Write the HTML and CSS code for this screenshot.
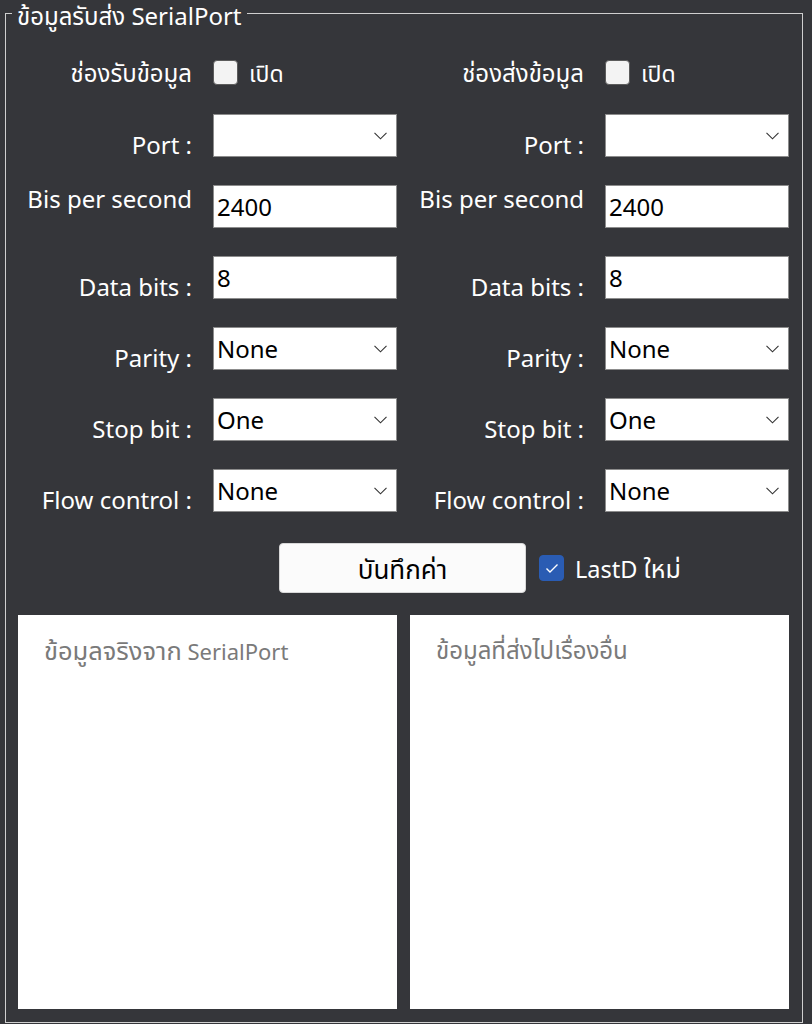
FILE: index.html
```html
<!DOCTYPE html>
<html lang="th">
<head>
<meta charset="utf-8">
<title>SerialPort</title>
<link rel="stylesheet" href="styles.css">
</head>
<body>
<div class="page">
  <fieldset class="group">
    <legend class="group-title">ข้อมูลรับส่ง SerialPort</legend>
    <div class="cols">
      <section class="col">
        <span class="label label-mid">ช่องรับข้อมูล</span>
        <label class="check"><span class="box"></span><span class="check-text">เปิด</span></label>

        <span class="label">Port :</span>
        <div class="combo"><span class="value"></span><svg class="chev" width="13" height="8" viewBox="0 0 13 8"><path d="M0.5 0.8 L6.5 6.8 L12.5 0.8" fill="none" stroke="#333" stroke-width="1.1"/></svg></div>

        <span class="label label-top">Bis per second</span>
        <div class="textbox">2400</div>

        <span class="label">Data bits :</span>
        <div class="textbox">8</div>

        <span class="label">Parity :</span>
        <div class="combo"><span class="value">None</span><svg class="chev" width="13" height="8" viewBox="0 0 13 8"><path d="M0.5 0.8 L6.5 6.8 L12.5 0.8" fill="none" stroke="#333" stroke-width="1.1"/></svg></div>

        <span class="label">Stop bit :</span>
        <div class="combo"><span class="value">One</span><svg class="chev" width="13" height="8" viewBox="0 0 13 8"><path d="M0.5 0.8 L6.5 6.8 L12.5 0.8" fill="none" stroke="#333" stroke-width="1.1"/></svg></div>

        <span class="label">Flow control :</span>
        <div class="combo"><span class="value">None</span><svg class="chev" width="13" height="8" viewBox="0 0 13 8"><path d="M0.5 0.8 L6.5 6.8 L12.5 0.8" fill="none" stroke="#333" stroke-width="1.1"/></svg></div>
      </section>

      <section class="col">
        <span class="label label-mid">ช่องส่งข้อมูล</span>
        <label class="check"><span class="box"></span><span class="check-text">เปิด</span></label>

        <span class="label">Port :</span>
        <div class="combo"><span class="value"></span><svg class="chev" width="13" height="8" viewBox="0 0 13 8"><path d="M0.5 0.8 L6.5 6.8 L12.5 0.8" fill="none" stroke="#333" stroke-width="1.1"/></svg></div>

        <span class="label label-top">Bis per second</span>
        <div class="textbox">2400</div>

        <span class="label">Data bits :</span>
        <div class="textbox">8</div>

        <span class="label">Parity :</span>
        <div class="combo"><span class="value">None</span><svg class="chev" width="13" height="8" viewBox="0 0 13 8"><path d="M0.5 0.8 L6.5 6.8 L12.5 0.8" fill="none" stroke="#333" stroke-width="1.1"/></svg></div>

        <span class="label">Stop bit :</span>
        <div class="combo"><span class="value">One</span><svg class="chev" width="13" height="8" viewBox="0 0 13 8"><path d="M0.5 0.8 L6.5 6.8 L12.5 0.8" fill="none" stroke="#333" stroke-width="1.1"/></svg></div>

        <span class="label">Flow control :</span>
        <div class="combo"><span class="value">None</span><svg class="chev" width="13" height="8" viewBox="0 0 13 8"><path d="M0.5 0.8 L6.5 6.8 L12.5 0.8" fill="none" stroke="#333" stroke-width="1.1"/></svg></div>
      </section>
    </div>

    <div class="actions">
      <button class="save-btn" type="button">บันทึกค่า</button>
      <label class="check check-on"><span class="box"><svg width="14" height="11" viewBox="0 0 14 11"><path d="M1.5 5.5 L5 9 L12.5 1.5" fill="none" stroke="#fff" stroke-width="1.4"/></svg></span><span class="check-text">LastD <span class="th-c">ใหม่</span></span></label>
    </div>

    <div class="logs">
      <div class="log"><span class="placeholder"><span class="th th-a">ข้อมูลจริงจาก</span> SerialPort</span></div>
      <div class="log"><span class="placeholder"><span class="th th-b">ข้อมูลที่ส่งไปเรื่องอื่น</span></span></div>
    </div>
  </fieldset>
</div>
</body>
</html>
```

FILE: styles.css
```css
* { box-sizing: border-box; }

html, body {
  margin: 0;
  padding: 0;
  background: #35363a;
}

body {
  font-family: "Noto Sans", "Noto Sans Thai", "Open Sans", sans-serif;
  color: #ffffff;
  width: 812px;
  height: 1024px;
  overflow: hidden;
}

.page {
  padding-left: 5px;
}

.group {
  margin: 0;
  width: 798px;
  height: 1023px;
  border: 1px solid #cfcfcf;
  padding: 33px 12px 12px 12px;
  display: flex;
  flex-direction: column;
}

.group-title {
  margin-left: -6px;
  padding: 0 5px;
  height: 26px;
  font-size: 24px;
  line-height: 32px;
  color: #ffffff;
  white-space: nowrap;
}

.cols {
  display: flex;
  gap: 13px;
}

.col {
  display: grid;
  grid-template-columns: 174px 184px;
  grid-template-rows: 27px repeat(6, 43px);
  column-gap: 21px;
  row-gap: 28px;
}

.label {
  font-size: 24px;
  line-height: 30px;
  text-align: right;
  white-space: nowrap;
  align-self: end;
  margin-bottom: -3px;
}

.label-top {
  align-self: start;
  margin-bottom: 0;
  margin-top: -1px;
}

.label-mid {
  align-self: center;
  margin-bottom: 0;
}

.check {
  display: flex;
  align-items: center;
  gap: 11px;
  font-size: 23px;
  line-height: 28px;
}

.box {
  width: 25px;
  height: 25px;
  border-radius: 4px;
  background: #f3f3f3;
  border: 1px solid #5b5b5b;
  display: flex;
  align-items: center;
  justify-content: center;
}

.check-on .box {
  background: #2a5cb3;
  border-color: #2a5cb3;
  height: 26px;
}

.textbox,
.combo {
  background: #ffffff;
  border: 1px solid #8c8c8c;
  color: #000000;
  font-size: 24px;
  line-height: 30px;
  padding: 0 3px;
  display: flex;
  align-items: center;
}

.combo {
  justify-content: space-between;
  padding-right: 9px;
}

.chev {
  display: block;
}

.actions {
  display: flex;
  align-items: center;
  gap: 13px;
  margin-top: 31px;
  padding-left: 261px;
}

.save-btn {
  width: 247px;
  height: 50px;
  background: #fbfbfb;
  border: 1px solid #d8d8d8;
  border-radius: 4px;
  font-family: inherit;
  font-size: 26px;
  line-height: 30px;
  padding: 2px 0 0 0;
  color: #000000;
}

.check-on {
  font-size: 23.5px;
}

.th-c {
  font-size: 25px;
}

.logs {
  display: grid;
  grid-template-columns: 379px 379px;
  gap: 13px;
  margin-top: 22px;
  height: 394px;
}

.log {
  background: #ffffff;
  padding: 20px 26px;
}

.placeholder {
  color: #7a7a7a;
  font-size: 22px;
  line-height: 30px;
  white-space: nowrap;
}

.th-a {
  font-size: 25.5px;
}

.th-b {
  font-size: 24px;
}
```
